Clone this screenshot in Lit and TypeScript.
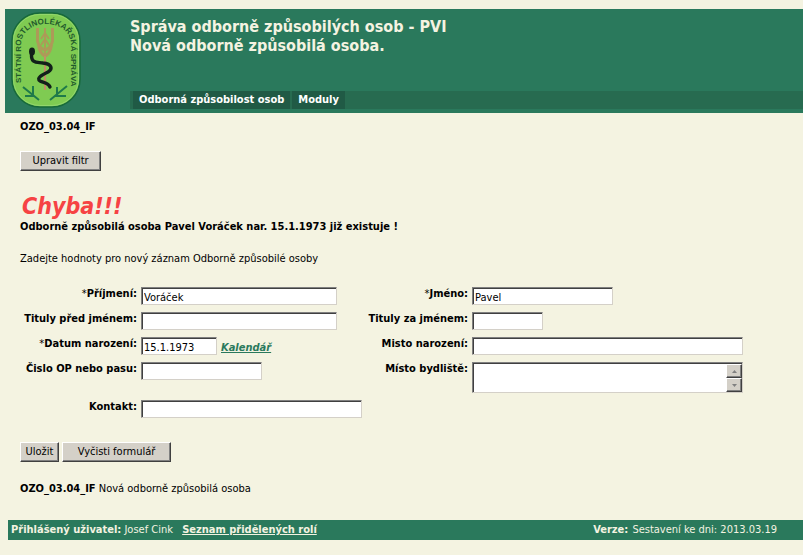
import { LitElement, html, css, svg } from "lit";
import { customElement, property } from "lit/decorators.js";

@customElement("agency-logo")
export class AgencyLogo extends LitElement {
  static styles = css`
    :host { display: block; }
    svg { display: block; width: 70px; height: 96px; }
    .ring { font: bold 8px "Liberation Sans", Arial, sans-serif; fill: #1f5a2c; }
  `;

  render() {
    return html`
      <svg viewBox="0 0 70 96" role="img" aria-label="Státní rostlinolékařská správa">
        ${svg`
          <rect x="1" y="1" width="68" height="94" rx="28" fill="#7fcb52" stroke="#17693a" stroke-width="1.5"/>
          <rect x="2.5" y="2.5" width="65" height="91" rx="26.500" fill="none" stroke="#98d873" stroke-width="0.8"/>
          <path id="ring" d="M10 71 V34 C10 20 21 12 35 12 C49 12 60 20 60 34 V84" fill="none"/>
          <text class="ring"><textPath href="#ring">STÁTNÍ ROSTLINOLÉKAŘSKÁ SPRÁVA</textPath></text>
          <g fill="none" stroke="#ad9a58">
            <path d="M34 16 V46" stroke-width="2"/>
            <path d="M26.500 16 V29 Q28 36 34 38 M41.500 16 V29 Q40 36 34 38 M27.500 33 Q29 42 34 44 M40.500 33 Q39 42 34 44" stroke-width="3"/>
            <path d="M34 21 L30 27 M34 21 L38 27 M34 27 L30 33 M34 27 L38 33" stroke-width="1.8"/>
            <path d="M34 44 V78" stroke="#c08f66" stroke-width="2"/>
          </g>
          <path d="M20.500 42 C20 52 26 50 32 51 C41 52 42 57 37 60 C31 63 25 66 29 69 C33 71 37 70 39 75" fill="none" stroke="#12211a" stroke-width="3.400" stroke-linecap="round"/>
          <ellipse cx="21" cy="39.500" rx="3" ry="4" fill="#12211a"/>
          <path d="M12 75 L28 88 M14 84 L23 84 M22 74 L22 83 M56 74 L39 88 M55 84 L44 84 M46 75 L46 83" fill="none" stroke="#1f7a4a" stroke-width="2"/>
        `}
      </svg>
    `;
  }
}

@customElement("app-header")
export class AppHeader extends LitElement {
  static styles = css`
    :host { display: block; }
    .banner { display: flex; background: #2a795c; color: #f4f3e1; height: 104px; }
    .logo { padding: 3px 0 0 6px; width: 119px; flex: none; }
    .main { flex: 1; display: flex; flex-direction: column; min-width: 0; padding-bottom: 4px; }
    h1 { margin: 8px 0 0; font-size: 16px; line-height: 19px; font-weight: bold; }
    .line { display: block; }
    .menu { display: flex; gap: 2px; height: 18px; margin-top: auto; padding-left: 3px; background: #276b50; }
    .menu a {
      padding: 0 6px; background: #205a45; color: #fff; text-decoration: none;
      font-weight: bold; line-height: 18px; white-space: nowrap;
    }
  `;

  render() {
    return html`
      <header class="banner">
        <div class="logo"><agency-logo></agency-logo></div>
        <div class="main">
          <h1>
            <span class="line">Správa odborně způsobilých osob - PVI</span>
            <span class="line">Nová odborně způsobilá osoba.</span>
          </h1>
          <nav class="menu">
            <a href="#osoby">Odborná způsobilost osob</a>
            <a href="#moduly">Moduly</a>
          </nav>
        </div>
      </header>
    `;
  }
}

@customElement("app-footer")
export class AppFooter extends LitElement {
  @property() user = "";
  @property() build = "";

  static styles = css`
    :host { display: block; }
    .bar {
      display: flex; justify-content: space-between; background: #2a795c; color: #f4f3e1;
      padding: 0 26px 0 3px; line-height: 20px; white-space: nowrap;
    }
    .roles { color: inherit; font-weight: bold; margin-left: 6px; }
    .version { margin-right: 1px; }
  `;

  render() {
    return html`
      <footer class="bar">
        <span><b>Přihlášený uživatel:</b> ${this.user} <a class="roles" href="#role">Seznam přidělených rolí</a></span>
        <span><b class="version">Verze:</b> Sestavení ke dni: ${this.build}</span>
      </footer>
    `;
  }
}

@customElement("app-root")
export class AppRoot extends LitElement {
  static styles = css`
    :host {
      display: block; box-sizing: border-box; min-height: 100vh; padding: 9px 0 15px 5px;
      background: #f4f3e1; color: #000;
      font-family: "DejaVu Sans Condensed", "DejaVu Sans", sans-serif; font-size: 11px; line-height: 14px;
    }
    main { padding: 7px 15px 0; }
    p { margin: 0; }
    button, input, textarea { font: inherit; color: inherit; border-radius: 0; box-sizing: border-box; margin: 0; }
    .button {
      height: 20px; padding: 0; background: #d4d0c8; border: 1px solid;
      border-color: #fff #404040 #404040 #fff; box-shadow: inset -1px -1px #808080; white-space: nowrap;
    }
    .filter { width: 81px; margin: 17px 0 22px; display: block; }
    .save { width: 39px; }
    .clear { width: 109px; }
    .error {
      margin: 0; padding-left: 2px; color: #f64244;
      font-size: 23px; line-height: 27px; font-style: italic; font-weight: bold;
    }
    .reason { font-weight: bold; }
    .hint { margin: 18px 0 21px; }
    .fields {
      display: grid; grid-template-columns: 118px 222px 103px minmax(0, 1fr);
      column-gap: 3px; row-gap: 7px; align-items: start;
    }
    .label { font-weight: bold; text-align: right; white-space: nowrap; line-height: 14px; padding-right: 1px; }
    .star { font-weight: normal; }
    .field, .area {
      background: #fff; border: 1px solid; border-color: #808080 #d4d0c8 #d4d0c8 #808080;
      box-shadow: inset 1px 1px #404040;
    }
    .field { height: 18px; padding: 2px 2px 0 2px; max-width: 100%; display: block; outline: 0; }
    .date { display: flex; gap: 4px; align-items: center; }
    .calendar { color: #2a795c; font-weight: bold; font-style: italic; padding-top: 4px; }
    .title { width: 71px; }
    .day { width: 76px; }
    .number { width: 121px; }
    .short { width: 141px; }
    .medium { width: 196px; }
    .long { width: 221px; }
    .wide { width: 271px; }
    .area { display: flex; height: 31px; max-width: 100%; box-sizing: border-box; padding: 1px 0 0 1px; }
    .text { flex: 1; min-width: 0; border: 0; outline: 0; resize: none; overflow: hidden; padding: 1px; background: none; }
    .scroll { display: flex; flex-direction: column; width: 16px; }
    .step {
      flex: 1; min-height: 0; display: grid; place-items: center; padding: 0; background: #d4d0c8;
      border: 1px solid; border-color: #fff #404040 #404040 #fff; box-shadow: inset -1px -1px #808080;
    }
    .step svg { display: block; width: 5px; height: 3px; fill: #808080; }
    .actions { display: flex; gap: 3px; margin: 24px 0 20px; }
    app-footer { margin: 24px 0 0 3px; }
  `;

  private field(id: string, label: string, size: string, value = "", required = false) {
    return html`
      <label class="label" for=${id}>${required ? html`<span class="star">*</span>` : ""}${label}:</label>
      <input class="field ${size}" id=${id} type="text" .value=${value} />
    `;
  }

  private scrollArea(lines: number) {
    this.renderRoot.querySelector("textarea")?.scrollBy(0, lines * 14);
  }

  render() {
    return html`
      <app-header></app-header>
      <main>
        <p><b>OZO_03.04_IF</b></p>
        <button class="button filter" type="button">Upravit filtr</button>
        <h2 class="error">Chyba!!!</h2>
        <p class="reason">Odborně způsobilá osoba Pavel Voráček nar. 15.1.1973 již existuje !</p>
        <p class="hint">Zadejte hodnoty pro nový záznam Odborně způsobilé osoby</p>
        <form @submit=${(e: Event) => e.preventDefault()}>
          <div class="fields">
            ${this.field("surname", "Příjmení", "medium", "Voráček", true)}
            ${this.field("name", "Jméno", "short", "Pavel", true)}
            ${this.field("before", "Tituly před jménem", "medium")}
            ${this.field("after", "Tituly za jménem", "title")}
            <label class="label" for="born"><span class="star">*</span>Datum narození:</label>
            <div class="date">
              <input class="field day" id="born" type="text" .value=${"15.1.1973"} />
              <a class="calendar" href="#kalendar">Kalendář</a>
            </div>
            ${this.field("place", "Misto narození", "wide")}
            ${this.field("idcard", "Čislo OP nebo pasu", "number")}
            <label class="label" for="address">Místo bydliště:</label>
            <div class="area wide">
              <textarea class="text" id="address"></textarea>
              <div class="scroll">
                <button class="step" type="button" aria-label="Nahoru" @click=${() => this.scrollArea(-1)}>
                  <svg viewBox="0 0 5 3"><path d="M0 3 L2.500 0 L5 3Z" /></svg>
                </button>
                <button class="step" type="button" aria-label="Dolů" @click=${() => this.scrollArea(1)}>
                  <svg viewBox="0 0 5 3"><path d="M0 0 L2.500 3 L5 0Z" /></svg>
                </button>
              </div>
            </div>
            ${this.field("contact", "Kontakt", "long")}
          </div>
          <div class="actions">
            <button class="button save" type="submit">Uložit</button>
            <button class="button clear" type="reset">Vyčisti formulář</button>
          </div>
        </form>
        <p><b>OZO_03.04_IF</b> Nová odborně způsobilá osoba</p>
      </main>
      <app-footer user="Josef Cink" build="2013.03.19"></app-footer>
    `;
  }
}
